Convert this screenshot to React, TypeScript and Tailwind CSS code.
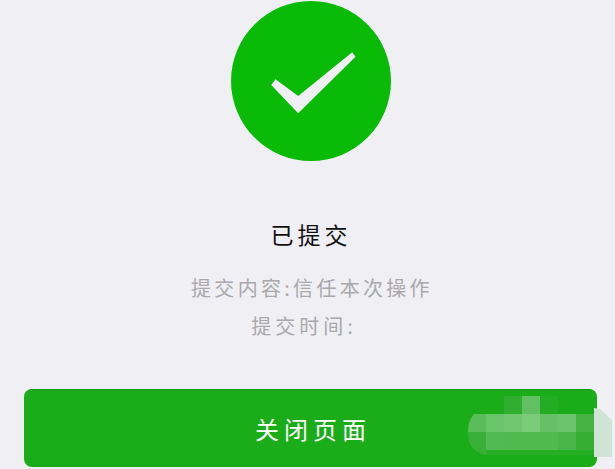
const mosaic: [number, number, number, number, string][] = [
  [504, 396, 18, 18, '#2fae2f'],
  [522, 396, 18, 18, '#62bf62'],
  [540, 396, 18, 18, '#24ac24'],
  [486, 414, 18, 18, '#6ac46a'],
  [504, 414, 18, 18, '#6fc66f'],
  [522, 414, 18, 18, '#7acb7a'],
  [540, 414, 18, 18, '#66c166'],
  [558, 414, 18, 18, '#6cc56c'],
  [576, 414, 18, 18, '#44b544'],
  [486, 432, 18, 18, '#52ba52'],
  [504, 432, 18, 18, '#50b950'],
  [522, 432, 18, 18, '#50b950'],
  [540, 432, 18, 18, '#50b950'],
  [558, 432, 18, 18, '#48b648'],
  [576, 432, 18, 18, '#34ae34'],
  [486, 450, 108, 5, '#26ae25'],
]

function App() {
  return (
    <div className="relative h-[469px] w-[615px] overflow-hidden bg-[#efeff4] font-['Noto_Sans_CJK_SC','Noto_Sans',sans-serif]">
      <main className="flex flex-col items-center pl-[6px]">
        <div className="mt-px grid h-[160px] w-[160px] place-items-center rounded-full bg-[#09bb07]">
          <svg width="160" height="160" viewBox="0 0 160 160">
            <path d="M40.2 84 L44.5 78.3 L67.2 95 L121.2 51.3 L124.5 55.7 L67.2 112.3 Z" fill="#efeff4" />
          </svg>
        </div>
        <h1 className="mt-[56px] pl-[1px] text-[23px] leading-[34px] tracking-[4px] text-[#111]">已提交</h1>
        <p className="mt-[18px] pl-[3px] text-[20px] leading-[38px] tracking-[3.3px] text-[#a9a9ab]">提交内容:信任本次操作</p>
        <p className="pr-[13px] text-[20px] leading-[38px] tracking-[4px] text-[#a9a9ab]">提交时间:</p>
        <button className="mt-[44px] h-[78px] w-[573px] rounded-[8px] border-t border-[#0f9a0f] bg-[#1aad19] pl-[5px] text-[24px] tracking-[5px] text-white">
          关闭页面
        </button>
      </main>
      <svg className="absolute top-0 left-0" width="615" height="469" viewBox="0 0 615 469">
        <path d="M486 414 H474 Q468 420 468 432 H486 Z" fill="#5abd5a" />
        <path d="M468 432 H486 V455 Q474 453 470 444 Q468 440 468 432 Z" fill="#38b038" />
        {mosaic.map(([x, y, w, h, fill]) => (
          <rect key={`${x}-${y}`} x={x} y={y} width={w} height={h} fill={fill} />
        ))}
        <path d="M594 408 L600 409 L612 420 V457 H594 Z" fill="#d0e4d6" />
      </svg>
    </div>
  )
}

export default App
